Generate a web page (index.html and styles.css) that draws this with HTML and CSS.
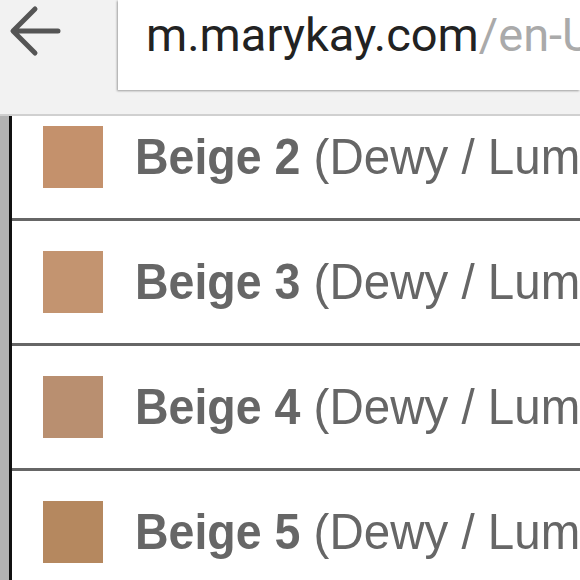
FILE: index.html
```html
<!DOCTYPE html>
<html lang="en">
<head>
    <meta charset="UTF-8">
    <meta name="viewport" content="width=device-width, initial-scale=1.0">
    <title>Shades</title>
    <link rel="stylesheet" href="styles.css">
</head>
<body>

<div class="toolbar">
    <button class="back-btn" aria-label="Back">
        <svg width="70" height="62" viewBox="0 0 70 62">
            <path d="M58 31 H15 M35 9 L13 31 L35 53" fill="none" stroke="#555" stroke-width="5" stroke-linecap="round" stroke-linejoin="round"/>
        </svg>
    </button>
    <div class="omnibox">
        <span class="host">m.marykay.com</span><span class="path">/en-US/products/foundation</span>
    </div>
</div>

<div class="viewport">
    <div class="gutter"></div>
    <ul class="shades">
        <li class="shade">
            <span class="swatch" style="background: #c4916c;"></span>
            <span class="label"><b>Beige 2</b> (Dewy / Luminous)</span>
        </li>
        <li class="shade">
            <span class="swatch" style="background: #c39470;"></span>
            <span class="label"><b>Beige 3</b> (Dewy / Luminous)</span>
        </li>
        <li class="shade">
            <span class="swatch" style="background: #b98f70;"></span>
            <span class="label"><b>Beige 4</b> (Dewy / Luminous)</span>
        </li>
        <li class="shade">
            <span class="swatch" style="background: #b5885f;"></span>
            <span class="label"><b>Beige 5</b> (Dewy / Luminous)</span>
        </li>
    </ul>
</div>

</body>
</html>
```

FILE: styles.css
```css
body {
    margin: 0;
    width: 580px;
    height: 580px;
    overflow: hidden;
    background: #fff;
    font-family: "Liberation Sans", Arial, sans-serif;
}
.toolbar {
    display: flex;
    height: 114px;
    background: #f2f2f2;
    border-bottom: 2px solid #d0d0d0;
}
.back-btn {
    width: 118px;
    height: 62px;
    padding: 0;
    border: none;
    background: none;
    display: flex;
    align-items: flex-start;
}
.omnibox {
    flex: 1;
    height: 90px;
    box-sizing: border-box;
    padding: 11px 0 0 28px;
    background: #fff;
    box-shadow: -1px 1px 2px rgba(0, 0, 0, 0.35);
    font-family: Roboto, "Liberation Sans", sans-serif;
    font-size: 47px;
    line-height: 47px;
    white-space: nowrap;
    overflow: hidden;
}
.host {
    color: #222;
}
.path {
    color: #aaa;
}
.viewport {
    display: flex;
    height: 464px;
    overflow: hidden;
}
.gutter {
    width: 9px;
    background: #b3b3b3;
    border-right: 3px solid #111;
}
.shades {
    flex: 1;
    list-style: none;
    margin: -20px 0 0 0;
    padding: 0;
    overflow: hidden;
}
.shade {
    display: flex;
    align-items: center;
    height: 122px;
    border-bottom: 3px solid #666;
    padding-left: 31px;
    white-space: nowrap;
}
.swatch {
    flex: none;
    width: 60px;
    height: 62px;
}
.label {
    margin-left: 32px;
    color: #666;
    font-size: 47.5px;
    line-height: 1;
    transform: scaleY(1.07);
}
.label b {
    font-size: 46.5px;
    font-weight: bold;
}
```
